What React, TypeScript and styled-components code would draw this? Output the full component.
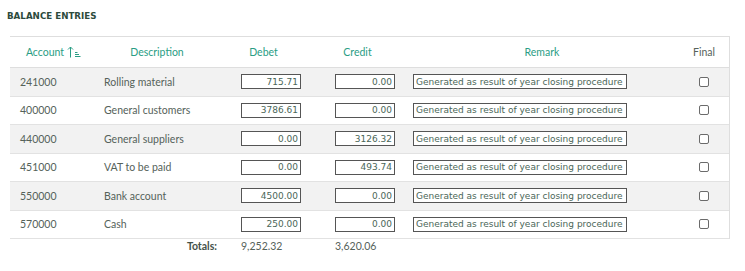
import React from "react";
import styled, { createGlobalStyle } from "styled-components";

const Teal = "#2a9d84";
const DarkGreen = "#2c4a3c";
const RowText = "#55625a";

type Entry = {
  account: string;
  description: string;
  debet: string;
  credit: string;
  remark: string;
};

const entries: Entry[] = [
  { account: "241000", description: "Rolling material", debet: "715.71", credit: "0.00", remark: "Generated as result of year closing procedure" },
  { account: "400000", description: "General customers", debet: "3786.61", credit: "0.00", remark: "Generated as result of year closing procedure" },
  { account: "440000", description: "General suppliers", debet: "0.00", credit: "3126.32", remark: "Generated as result of year closing procedure" },
  { account: "451000", description: "VAT to be paid", debet: "0.00", credit: "493.74", remark: "Generated as result of year closing procedure" },
  { account: "550000", description: "Bank account", debet: "4500.00", credit: "0.00", remark: "Generated as result of year closing procedure" },
  { account: "570000", description: "Cash", debet: "250.00", credit: "0.00", remark: "Generated as result of year closing procedure" },
];

const GlobalStyle = createGlobalStyle`
  body {
    margin: 0;
    background: #fff;
    font-family: Lato, "Open Sans", sans-serif;
  }
`;

const SortIcon = () => (
  <svg width="14" height="12" viewBox="0 0 14 12" fill="none" stroke={Teal} strokeWidth="1">
    <path d="M3.5 11.5V1" />
    <path d="M1 3.5L3.5 1L6 3.5" />
    <path d="M8 6.5h2.5M8 8.5h4M8 10.5h5.5" />
  </svg>
);

const App = () => {
  return (
    <Page>
      <GlobalStyle />
      <Title>Balance entries</Title>
      <Table>
        <HeaderRow>
          <HeadCell>
            Account <SortIcon />
          </HeadCell>
          <HeadCell>Description</HeadCell>
          <HeadCell>Debet</HeadCell>
          <HeadCell>Credit</HeadCell>
          <HeadCell>Remark</HeadCell>
          <HeadCell $dark>Final</HeadCell>
        </HeaderRow>
        {entries.map((e, i) => (
          <Row key={e.account} $shaded={i % 2 === 0}>
            <Cell $pad={10}>{e.account}</Cell>
            <Cell $pad={7}>{e.description}</Cell>
            <Cell $pad={24}>
              <AmountInput defaultValue={e.debet} />
            </Cell>
            <Cell $pad={25}>
              <AmountInput defaultValue={e.credit} />
            </Cell>
            <Cell $pad={8}>
              <RemarkInput defaultValue={e.remark} />
            </Cell>
            <CheckCell>
              <CheckBox />
            </CheckCell>
          </Row>
        ))}
      </Table>
      <TotalsRow>
        <TotalsLabel>Totals:</TotalsLabel>
        <TotalValue $pad={24}>9,252.32</TotalValue>
        <TotalValue $pad={25}>3,620.06</TotalValue>
      </TotalsRow>
    </Page>
  );
};

const columns = "87px 120px 93px 95px 274px 50px";

const Page = styled.div`
  width: 745px;
  height: 271px;
  box-sizing: border-box;
  padding: 11px 0 0 10px;
`;

const Title = styled.h2`
  margin: 0 0 15px -3px;
  font-family: "DejaVu Sans", sans-serif;
  font-size: 8.7px;
  font-weight: 700;
  line-height: 10px;
  text-transform: uppercase;
  color: ${DarkGreen};
`;

const Table = styled.div`
  width: 719px;
  border-top: 1px solid #dedede;
  border-right: 1px solid #dedede;
`;

const HeaderRow = styled.div`
  display: grid;
  grid-template-columns: ${columns};
  height: 31px;
  box-sizing: border-box;
  border-bottom: 1px solid #dedede;
  align-items: center;
`;

const HeadCell = styled.div<{ $dark?: boolean }>`
  display: flex;
  align-items: center;
  justify-content: center;
  gap: 3px;
  font-size: 10.5px;
  color: ${(p) => (p.$dark ? RowText : Teal)};
`;

const Row = styled.div<{ $shaded: boolean }>`
  display: grid;
  grid-template-columns: ${columns};
  height: 28.5px;
  box-sizing: border-box;
  border-bottom: 1px solid #e2e2e2;
  align-items: center;
  background: ${(p) => (p.$shaded ? "#f2f2f2" : "#fff")};
`;

const Cell = styled.div<{ $pad: number }>`
  padding-left: ${(p) => p.$pad}px;
  font-size: 10.5px;
  color: ${RowText};
  display: flex;
  align-items: center;
`;

const CheckCell = styled.div`
  display: flex;
  justify-content: center;
  align-items: center;
`;

const BaseInput = styled.input.attrs({ type: "text" })`
  box-sizing: border-box;
  height: 15px;
  margin: 0;
  padding: 0 2px;
  border: 1px solid #555;
  border-radius: 0;
  background: #fff;
  font-family: "DejaVu Sans", Verdana, sans-serif;
  font-size: 9px;
  color: #4a6658;
  outline: none;
`;

const AmountInput = styled(BaseInput)`
  width: 60px;
  text-align: right;
`;

const RemarkInput = styled(BaseInput)`
  width: 214px;
`;

const CheckBox = styled.span`
  width: 10px;
  height: 10px;
  box-sizing: border-box;
  border: 1px solid #6b6b6b;
  border-radius: 2px;
  background: #fff;
`;

const TotalsRow = styled.div`
  display: grid;
  grid-template-columns: ${columns};
  height: 14px;
  align-items: center;
  font-size: 10.5px;
`;

const TotalsLabel = styled.div`
  grid-column: 1 / 3;
  text-align: right;
  font-weight: 700;
  color: #44524a;
`;

const TotalValue = styled.div<{ $pad: number }>`
  padding-left: ${(p) => p.$pad}px;
  color: ${RowText};
`;

export default App;
